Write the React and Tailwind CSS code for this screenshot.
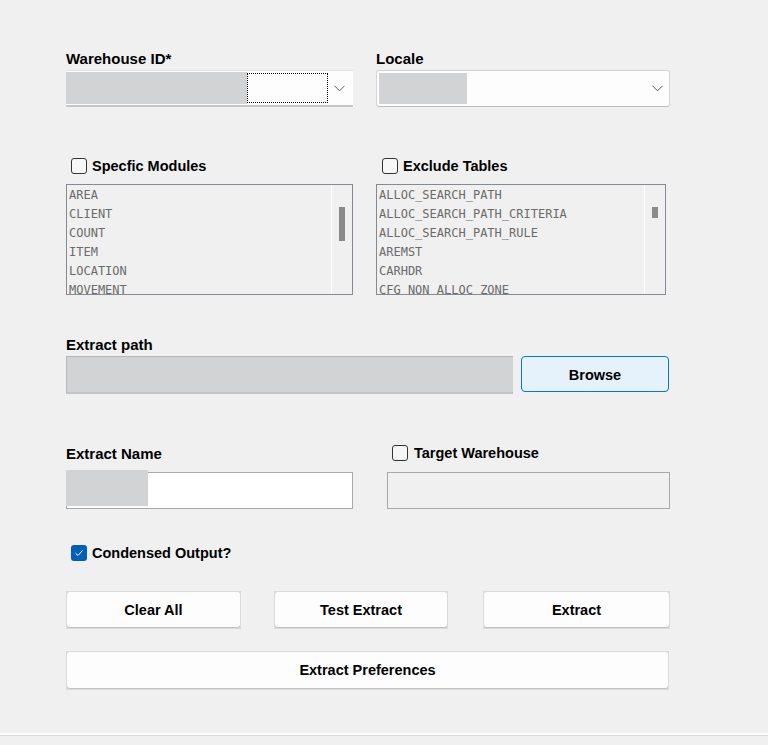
import React from 'react'

const MODULES = ['AREA', 'CLIENT', 'COUNT', 'ITEM', 'LOCATION', 'MOVEMENT']
const TABLES = [
  'ALLOC_SEARCH_PATH',
  'ALLOC_SEARCH_PATH_CRITERIA',
  'ALLOC_SEARCH_PATH_RULE',
  'AREMST',
  'CARHDR',
  'CFG_NON_ALLOC_ZONE',
]

const labelCls = 'text-[15px] font-bold text-black leading-[20px] h-[20px] pt-[1px]'

function Chevron() {
  return (
    <svg width="11" height="7" viewBox="0 0 11 7" className="shrink-0">
      <polyline points="0.5,0.8 5.5,5.8 10.5,0.8" fill="none" stroke="#5a5a5a" strokeWidth="1" />
    </svg>
  )
}

function CheckBox({ checked }) {
  if (checked) {
    return (
      <div className="w-[16px] h-[16px] rounded-[3px] bg-[#005fb8] flex items-center justify-center shrink-0">
        <svg width="10" height="8" viewBox="0 0 10 8">
          <polyline points="1.5,4.2 4,6.5 8.5,1.5" fill="none" stroke="white" strokeWidth="1" />
        </svg>
      </div>
    )
  }
  return <div className="w-[16px] h-[16px] rounded-[3px] border border-[#333] bg-[#f7f7f7] shrink-0" />
}

function ListBox({ items, width, thumbHeight }) {
  return (
    <div className={`${width} h-[111px] border border-[#848a94] bg-[#f0f0f0] flex overflow-hidden`}>
      <div className="flex-1 pl-[2px] pt-[1px] overflow-hidden">
        {items.map(item => (
          <div key={item} className="h-[19px] leading-[19px] text-[12px] text-[#6b6b6b] whitespace-nowrap" style={{ fontFamily: '"DejaVu Sans Mono", monospace' }}>
            {item}
          </div>
        ))}
      </div>
      <div className="w-[1px] bg-white" />
      <div className="w-[20px] flex justify-center pt-[22px]">
        <div className={`w-[6px] ${thumbHeight} bg-[#8a8a8a]`} />
      </div>
    </div>
  )
}

function Button({ children, width, height = 'h-[38px]', className = '' }) {
  return (
    <div className={`${width} ${height} bg-[#dadada] p-[1px] ${className}`}>
      <div className="w-full h-[calc(100%-1px)] rounded-[3px] bg-[#fdfdfd] shadow-[0_1px_0_#c2c2c2] flex items-center justify-center pt-[2px] text-[14.5px] font-bold text-black">
        {children}
      </div>
    </div>
  )
}

export default function App() {
  return (
    <div className="min-h-[745px] bg-[#f0f0f0] flex flex-col" style={{ fontFamily: '"Liberation Sans", Arial, sans-serif' }}>
      <div className="ml-[66px] w-[604px] pt-[48px] flex flex-col">
        {/* Warehouse / Locale */}
        <div className="flex gap-[23px]">
          <div className="w-[287px] flex flex-col">
            <div className={labelCls}>Warehouse ID*</div>
            <div className="mt-[2px] h-[37px] bg-[#fdfdfd] border-t border-[#e4e4e4] border-b-2 border-b-[#c6c6c6] flex items-center">
              <div className="w-[181px] h-[32px] bg-[#d2d3d4]" />
              <div className="w-[81px] h-[30px] border border-dotted border-black" />
              <div className="flex-1 flex justify-center pr-[2px]">
                <Chevron />
              </div>
            </div>
          </div>
          <div className="w-[294px] flex flex-col">
            <div className={labelCls}>Locale</div>
            <div className="mt-[2px] h-[37px] bg-[#fdfdfd] border border-[#d4d4d4] border-b-[#bdbdbd] rounded-[3px] flex items-center pl-[2px] pr-[6px]">
              <div className="w-[88px] h-[31px] bg-[#d2d3d4]" />
              <div className="flex-1" />
              <Chevron />
            </div>
          </div>
        </div>

        {/* Modules / Tables */}
        <div className="flex gap-[23px] mt-[49px]">
          <div className="w-[287px] flex flex-col">
            <div className="h-[20px] flex items-center gap-[5px] pl-[5px]">
              <CheckBox />
              <span className="text-[14.5px] font-bold pt-[1px]">Specfic Modules</span>
            </div>
            <div className="mt-[8px]">
              <ListBox items={MODULES} width="w-[287px]" thumbHeight="h-[34px]" />
            </div>
          </div>
          <div className="w-[290px] flex flex-col">
            <div className="h-[20px] flex items-center gap-[5px] pl-[6px]">
              <CheckBox />
              <span className="text-[14.5px] font-bold pt-[1px]">Exclude Tables</span>
            </div>
            <div className="mt-[8px]">
              <ListBox items={TABLES} width="w-[290px]" thumbHeight="h-[11px]" />
            </div>
          </div>
        </div>

        {/* Extract path */}
        <div className="mt-[39px] flex flex-col">
          <div className={labelCls}>Extract path</div>
          <div className="mt-[2px] flex items-start gap-[8px]">
            <div className="w-[447px] h-[38px] bg-[#d2d3d4] border-t border-l border-[#b8b8b8] border-b-2 border-b-[#c4c4c4]" />
            <div className="w-[148px] h-[36px] bg-[#e5f1fb] border border-[#0078d4] rounded-[4px] flex items-center justify-center pt-[3px] text-[14.5px] font-bold">
              Browse
            </div>
          </div>
        </div>

        {/* Extract name / Target warehouse */}
        <div className="mt-[49px] flex gap-[34px]">
          <div className="w-[287px] flex flex-col">
            <div className={labelCls}>Extract Name</div>
            <div className="mt-[9px] h-[37px] bg-white border border-[#a9a9a9] flex">
              <div className="w-[82px] h-[36px] -mt-[3px] -ml-[1px] bg-[#d2d3d4]" />
            </div>
          </div>
          <div className="w-[283px] flex flex-col">
            <div className="h-[20px] flex items-center gap-[6px] pl-[5px]">
              <CheckBox />
              <span className="text-[14.5px] font-bold pt-[1px]">Target Warehouse</span>
            </div>
            <div className="mt-[9px] h-[37px] bg-[#f0f0f0] border border-[#a9a9a9]" />
          </div>
        </div>

        {/* Condensed */}
        <div className="mt-[34px] h-[20px] flex items-center gap-[5px] pl-[5px]">
          <CheckBox checked />
          <span className="text-[14.5px] font-bold pt-[1px]">Condensed Output?</span>
        </div>

        {/* Action buttons */}
        <div className="mt-[28px] flex">
          <Button width="w-[175px]">Clear All</Button>
          <Button width="w-[174px]" className="ml-[33px]">Test Extract</Button>
          <Button width="w-[187px]" className="ml-[35px]">Extract</Button>
        </div>
        <div className="mt-[22px]">
          <Button width="w-[603px]" height="h-[39px]">Extract Preferences</Button>
        </div>
      </div>

      <div className="mt-[43px] h-[2px] bg-white" />
      <div className="h-[1px] bg-[#dcdcdc]" />
      <div className="flex-1 bg-[#f0f0f0]" />
    </div>
  )
}
